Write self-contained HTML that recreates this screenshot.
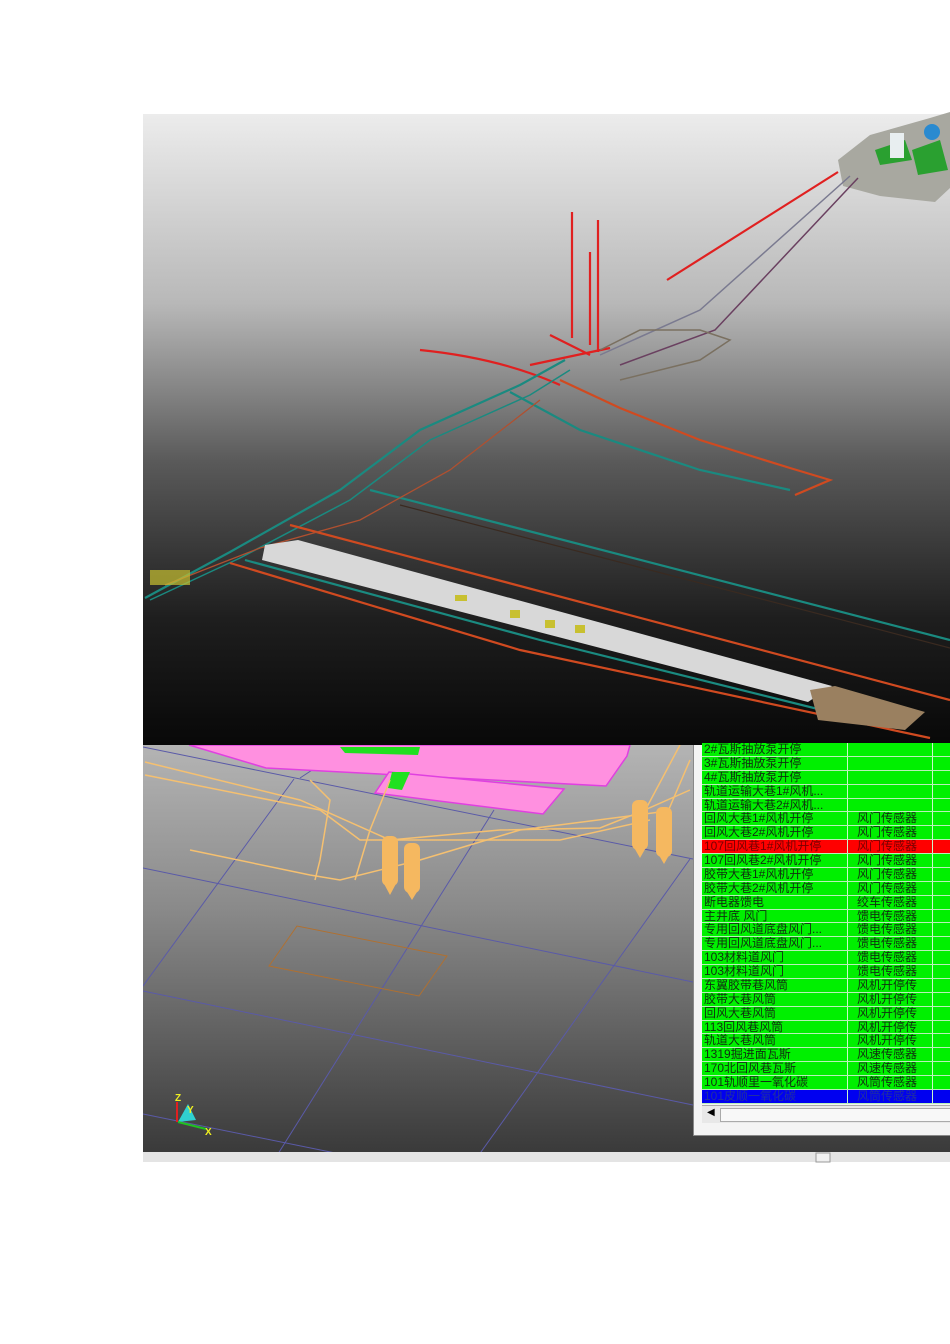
<!DOCTYPE html>
<html><head><meta charset="utf-8"><style>
body{margin:0;background:#fff;width:950px;height:1344px;position:relative;overflow:hidden}
.tbl{position:absolute;left:693px;top:745px;width:257px;height:390px;background:#f4f4f4;border-left:1px solid #888;border-bottom:1px solid #888}
.rows{position:absolute;left:8px;top:-2px;width:249px}
.r{height:13.88px;box-sizing:border-box;border-bottom:1px solid #b8f0b8;background:#00f000;font:12px/13px "Liberation Sans","WenQuanYi Zen Hei","Noto Sans CJK SC",sans-serif;color:#103010;white-space:nowrap;position:relative;overflow:hidden}
.r span{position:absolute;top:0}
.r .a{left:2px}.r .b{left:155px}
.r:before{content:"";position:absolute;left:145px;top:0;bottom:0;border-left:1px solid #c8f8c8}
.r:after{content:"";position:absolute;left:230px;top:0;bottom:0;border-left:1px solid #c8f8c8}
.red{background:#ff0000;color:#700}.blue{background:#0000f0;color:#2030a0}
</style></head><body>
<svg width="950" height="1344" style="position:absolute;left:0;top:0">
<defs>
<linearGradient id="g1" x1="0" y1="0" x2="0" y2="1"><stop offset="0" stop-color="#ececec"/><stop offset="0.3" stop-color="#b8b8b8"/><stop offset="0.55" stop-color="#5a5a5a"/><stop offset="0.8" stop-color="#1e1e1e"/><stop offset="1" stop-color="#080808"/></linearGradient>
<linearGradient id="g2" x1="0" y1="0" x2="0" y2="1"><stop offset="0" stop-color="#b4b4b4"/><stop offset="0.4" stop-color="#8a8a8a"/><stop offset="1" stop-color="#3a3a3a"/></linearGradient>
<clipPath id="c2"><rect x="143" y="745" width="807" height="407"/></clipPath>
</defs>
<rect x="143" y="114" width="807" height="631" fill="url(#g1)"/>
<rect x="143" y="745" width="807" height="407" fill="url(#g2)"/>
<rect x="143" y="1152" width="807" height="10" fill="#e4e4e4"/>
<rect x="816" y="1153" width="14" height="9" fill="#f0f0f0" stroke="#999"/>
<polygon points="838,160 870,135 930,118 950,112 950,188 935,202 880,196 843,186" fill="#a8a8a0"/>
<polygon points="875,150 905,140 912,160 880,165" fill="#2aa030"/><polygon points="912,150 940,140 948,170 918,175" fill="#2aa030"/>
<rect x="890" y="133" width="14" height="25" fill="#e8eef0"/><circle cx="932" cy="132" r="8" fill="#2a8ad0"/>
<g fill="none" stroke-width="2.2">
<path d="M667,280 L838,172" stroke="#e02020"/>
<path d="M850,176 L700,310 L600,355" stroke="#7a7a90" stroke-width="1.5"/>
<path d="M858,178 L715,330 L620,365" stroke="#6a4060" stroke-width="1.5"/>
<path d="M572,212 L572,338 M598,220 L598,352 M590,252 L590,345" stroke="#e02020"/>
<path d="M420,350 Q500,358 560,385 M550,335 L590,355 M530,365 L610,348" stroke="#e02020"/>
<path d="M600,350 L640,330 L700,330 L730,340 L700,360 L620,380" stroke="#7a7060" stroke-width="1.5"/>
<path d="M145,598 L230,552 L340,490 L420,430 L520,385 L565,360" stroke="#1a8a80"/>
<path d="M150,600 L240,558 L350,500 L430,440 L530,395 L570,370" stroke="#1a8a80" stroke-width="1.5"/>
<path d="M510,392 L580,430 L700,470 L790,490" stroke="#1a8a80"/>
<path d="M560,380 L620,408 L700,440 L790,468 L830,480 L795,495" stroke="#d04a20"/>
<path d="M370,490 L950,640" stroke="#1a8a80"/>
<path d="M400,505 L950,648" stroke="#3a2a20" stroke-width="1.2"/>
<path d="M290,525 L950,700" stroke="#d04a20"/>
<path d="M230,563 L520,650 L930,738" stroke="#d04a20"/>
<path d="M245,560 L540,640 L830,712" stroke="#1a8a80"/>
<path d="M165,585 L260,548 L360,520 L450,470 L540,400" stroke="#b05030" stroke-width="1.3"/>
</g>
<polygon points="265,545 298,540 832,686 808,702 262,560" fill="#d8d8d8"/>
<polygon points="810,690 835,686 925,712 905,730 818,720" fill="#9a8060"/>
<g fill="#c8c030"><rect x="150" y="570" width="40" height="15" opacity=".7"/><rect x="455" y="595" width="12" height="6"/><rect x="510" y="610" width="10" height="8"/><rect x="545" y="620" width="10" height="8"/><rect x="575" y="625" width="10" height="8"/></g>
<g clip-path="url(#c2)">
<g stroke="#5a5aa8" stroke-width="1" fill="none">
<path d="M143,747 L693,859 M143,868 L693,982 M143,991 L693,1105 M143,1114 L434,1173"/>
<path d="M294,779 L143,986 M494,810 L266,1173 M690,859 L466,1173 M350,745 L300,778"/>
</g>
<polygon points="189,745 630,745 627,756 606,786 266,768" fill="#ff90e0" stroke="#e040e0" stroke-width="1.5"/>
<polygon points="389,772 564,789 543,814 375,793" fill="#ff90e0" stroke="#e040e0" stroke-width="1.5"/>
<polygon points="340,747 420,747 418,755 345,753" fill="#20e020"/>
<polygon points="392,772 410,772 402,790 388,788" fill="#20e020"/>
<g stroke="#f5c070" stroke-width="1.5" fill="none">
<path d="M145,762 L300,800 L390,840 L500,830 L600,828 L640,812 L690,790"/>
<path d="M145,775 L320,810 L360,840 L460,840 L560,840 L650,820"/>
<path d="M190,850 L310,875 L340,880 L420,860 L520,830 L660,812"/>
<path d="M310,780 L330,800 L320,860 L315,880 M390,780 L370,830 L355,880"/>
<path d="M680,745 L640,820 M690,760 L660,830"/>
<path d="M269,966 L297,926 L447,956 L419,996 Z" stroke="#b07030" stroke-width="1"/>
</g>
<g fill="#f5b860">
<rect x="382" y="836" width="16" height="50" rx="6"/><polygon points="382,880 398,880 390,895"/>
<rect x="404" y="843" width="16" height="50" rx="6"/><polygon points="404,887 420,887 412,900"/>
<rect x="632" y="800" width="16" height="50" rx="6"/><polygon points="632,844 648,844 640,858"/>
<rect x="656" y="807" width="16" height="50" rx="6"/><polygon points="656,850 672,850 664,864"/>
</g>
</g>
<g font-family="Liberation Sans" font-size="10" font-weight="bold" fill="#f0f020">
<line x1="177" y1="1102" x2="177" y2="1122" stroke="#e02020" stroke-width="2"/>
<polygon points="178,1122 188,1104 196,1120" fill="#30d0d0"/>
<line x1="178" y1="1122" x2="206" y2="1129" stroke="#20c020" stroke-width="2"/>
<text x="175" y="1101">Z</text><text x="187" y="1113">Y</text><text x="205" y="1135">X</text>
</g>
</svg>
<div class="tbl">
<div class="rows">
<div class="r"><span class="a">2#瓦斯抽放泵开停</span></div>
<div class="r"><span class="a">3#瓦斯抽放泵开停</span></div>
<div class="r"><span class="a">4#瓦斯抽放泵开停</span></div>
<div class="r"><span class="a">轨道运输大巷1#风机...</span></div>
<div class="r"><span class="a">轨道运输大巷2#风机...</span></div>
<div class="r"><span class="a">回风大巷1#风机开停</span><span class="b">风门传感器</span></div>
<div class="r"><span class="a">回风大巷2#风机开停</span><span class="b">风门传感器</span></div>
<div class="r red"><span class="a">107回风巷1#风机开停</span><span class="b">风门传感器</span></div>
<div class="r"><span class="a">107回风巷2#风机开停</span><span class="b">风门传感器</span></div>
<div class="r"><span class="a">胶带大巷1#风机开停</span><span class="b">风门传感器</span></div>
<div class="r"><span class="a">胶带大巷2#风机开停</span><span class="b">风门传感器</span></div>
<div class="r"><span class="a">断电器馈电</span><span class="b">绞车传感器</span></div>
<div class="r"><span class="a">主井底 风门</span><span class="b">馈电传感器</span></div>
<div class="r"><span class="a">专用回风道底盘风门...</span><span class="b">馈电传感器</span></div>
<div class="r"><span class="a">专用回风道底盘风门...</span><span class="b">馈电传感器</span></div>
<div class="r"><span class="a">103材料道风门</span><span class="b">馈电传感器</span></div>
<div class="r"><span class="a">103材料道风门</span><span class="b">馈电传感器</span></div>
<div class="r"><span class="a">东翼胶带巷风筒</span><span class="b">风机开停传</span></div>
<div class="r"><span class="a">胶带大巷风筒</span><span class="b">风机开停传</span></div>
<div class="r"><span class="a">回风大巷风筒</span><span class="b">风机开停传</span></div>
<div class="r"><span class="a">113回风巷风筒</span><span class="b">风机开停传</span></div>
<div class="r"><span class="a">轨道大巷风筒</span><span class="b">风机开停传</span></div>
<div class="r"><span class="a">1319掘进面瓦斯</span><span class="b">风速传感器</span></div>
<div class="r"><span class="a">170北回风巷瓦斯</span><span class="b">风速传感器</span></div>
<div class="r"><span class="a">101轨顺里一氧化碳</span><span class="b">风筒传感器</span></div>
<div class="r blue"><span class="a">101皮顺一氧化碳</span><span class="b">风筒传感器</span></div>
</div>
<div style="position:absolute;left:8px;top:360px;width:249px;height:17px;background:#e8e8e8;border-top:1px solid #aaa"><div style="position:absolute;left:18px;top:2px;width:240px;height:12px;background:#f8f8f8;border:1px solid #aaa"></div><span style="position:absolute;left:5px;top:1px;font-size:10px">◀</span></div>
</div>
</body></html>
